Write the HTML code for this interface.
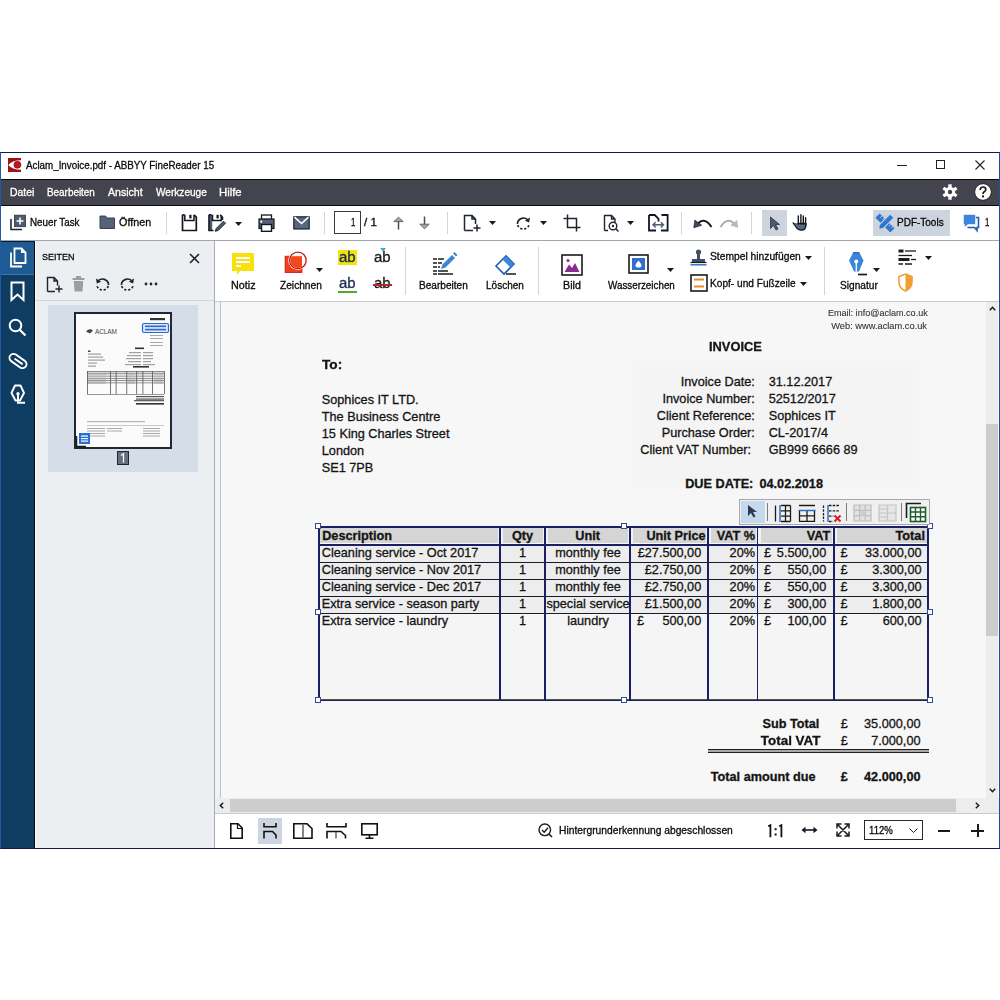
<!DOCTYPE html>
<html><head><meta charset="utf-8">
<style>
*{margin:0;padding:0;box-sizing:border-box}
html,body{width:1000px;height:1000px;background:#fff;overflow:hidden}
body{position:relative;font-family:"Liberation Sans",sans-serif;color:#0a0a0a}
.a{position:absolute}
.t{position:absolute;white-space:nowrap;-webkit-text-stroke:0.3px currentColor}
.sep{position:absolute;width:1px;background:#d4d4d4}
svg{position:absolute;overflow:visible}
</style></head><body>
<div class="a" style="left:0px;top:152px;width:1000px;height:697px;background:#ffffff;border:1px solid #121a4c;border-left-color:#2258a8;border-right-color:#1f4f9c"></div>
<svg style="left:8px;top:158px" width="13" height="14" viewBox="0 0 13 14"><rect width="13" height="14" fill="#9c1219"/><path d="M0.3 7Q4 2.3 13 2.3V11.7Q4 11.7 0.3 7Z" fill="#fff"/><circle cx="9.4" cy="6.8" r="3.5" fill="#c8141c" stroke="#5a0a0e" stroke-width="0.6"/></svg>
<div class="t" style="top:159.50px;font-size:10.5px;line-height:11.73px;left:25.58px;transform:scaleX(0.9325);transform-origin:0 0;">Aclam_Invoice.pdf - ABBYY FineReader 15</div>
<div class="a" style="left:897px;top:165px;width:10px;height:1px;background:#222;"></div>
<div class="a" style="left:936px;top:160px;width:9px;height:9px;background:transparent;border:1px solid #222"></div>
<svg style="left:975px;top:160px" width="10" height="10" viewBox="0 0 10 10"><path d="M0.5 0.5L9.5 9.5M9.5 0.5L0.5 9.5" stroke="#222" stroke-width="1.1"/></svg>
<div class="a" style="left:1px;top:179px;width:998px;height:27px;background:#44444f;border-top:1px solid #08080f;border-bottom:1px solid #08080f"></div>
<div class="t" style="top:187.00px;font-size:10.5px;line-height:11.73px;color:#ffffff;left:9.58px;transform:scaleX(0.9930);transform-origin:0 0;">Datei</div>
<div class="t" style="top:187.00px;font-size:10.5px;line-height:11.73px;color:#ffffff;left:47.08px;transform:scaleX(0.9420);transform-origin:0 0;">Bearbeiten</div>
<div class="t" style="top:187.00px;font-size:10.5px;line-height:11.73px;color:#ffffff;left:108.38px;transform:scaleX(1.0060);transform-origin:0 0;">Ansicht</div>
<div class="t" style="top:187.00px;font-size:10.5px;line-height:11.73px;color:#ffffff;left:155.88px;transform:scaleX(0.9608);transform-origin:0 0;">Werkzeuge</div>
<div class="t" style="top:187.00px;font-size:10.5px;line-height:11.73px;color:#ffffff;left:219.08px;transform:scaleX(1.0778);transform-origin:0 0;">Hilfe</div>
<svg style="left:942px;top:184px" width="16" height="16" viewBox="0 0 16 16"><g fill="#fff"><circle cx="8" cy="8" r="5.2"/><rect x="6.3" y="0.3" width="3.4" height="4" transform="rotate(0 8 8)"/><rect x="6.3" y="0.3" width="3.4" height="4" transform="rotate(60 8 8)"/><rect x="6.3" y="0.3" width="3.4" height="4" transform="rotate(120 8 8)"/><rect x="6.3" y="0.3" width="3.4" height="4" transform="rotate(180 8 8)"/><rect x="6.3" y="0.3" width="3.4" height="4" transform="rotate(240 8 8)"/><rect x="6.3" y="0.3" width="3.4" height="4" transform="rotate(300 8 8)"/></g><circle cx="8" cy="8" r="2.2" fill="#43434e"/></svg>
<svg style="left:974px;top:183px" width="18" height="18" viewBox="0 0 18 18"><circle cx="9" cy="9" r="8.3" fill="#fff" stroke="#111" stroke-width="0.8"/><path d="M6.2 7Q6.2 4 9 4Q11.8 4 11.8 6.5Q11.8 8 10 9Q9 9.6 9 11" fill="none" stroke="#1b1b1b" stroke-width="1.7"/><rect x="8" y="12.4" width="2" height="2" fill="#1b1b1b"/></svg>
<div class="a" style="left:1px;top:206px;width:998px;height:35px;background:#ffffff;border-bottom:1px solid #a4a6a9"></div>
<svg style="left:9px;top:214px" width="18" height="17" viewBox="0 0 18 17"><path d="M2 5V15.5H13" fill="none" stroke="#1d2530" stroke-width="1.6"/><rect x="5.5" y="1.2" width="11" height="11.5" fill="#4e5c72" stroke="#2b3444" stroke-width="0.8"/><path d="M11 3.5V10.5M7.5 7H14.5" stroke="#fff" stroke-width="1.6"/></svg>
<div class="t" style="top:216.50px;font-size:10.5px;line-height:11.73px;left:30.38px;transform:scaleX(0.9348);transform-origin:0 0;">Neuer Task</div>
<svg style="left:99px;top:214px" width="17" height="16" viewBox="0 0 17 16"><path d="M1 2H6.5L8 4H15.5V14.5H1Z" fill="#566277" stroke="#2b3444" stroke-width="0.9"/></svg>
<div class="t" style="top:216.50px;font-size:10.5px;line-height:11.73px;left:119.08px;transform:scaleX(1.0258);transform-origin:0 0;">Öffnen</div>
<div class="sep" style="left:166px;top:212px;height:22px"></div>
<svg style="left:181px;top:214px" width="17" height="18" viewBox="0 0 17 18"><path d="M1.5 0.8V16.5H15.3V3.2L13 0.8M1.5 0.8H3.5" fill="none" stroke="#111820" stroke-width="1.7"/><path d="M3.8 0.8V6.5H13V1" fill="none" stroke="#111820" stroke-width="1.5"/><rect x="8.3" y="0.8" width="2.2" height="3.6" fill="#111820"/></svg>
<svg style="left:208px;top:214px" width="19" height="18" viewBox="0 0 19 18"><rect x="0.6" y="0.8" width="3.6" height="16" fill="#4e5c72"/><path d="M1 0.8V16.5H5.5M1 0.8H3.5M14.5 6V3.2L12.2 0.8" fill="none" stroke="#111820" stroke-width="1.5"/><path d="M4.5 0.8V6.5H13.2V1" fill="none" stroke="#111820" stroke-width="1.5"/><rect x="8.5" y="0.8" width="2.2" height="3.6" fill="#111820"/><path d="M7.3 17.3L8.2 14.5L15.5 7.2L17.5 9.2L10.2 16.5Z" fill="#4e5c72" stroke="#111820" stroke-width="0.9"/></svg>
<svg style="left:235px;top:222px" width="7" height="4" viewBox="0 0 7 4"><path d="M0 0H7L3.5 4Z" fill="#1b1b1b"/></svg>
<svg style="left:258px;top:214px" width="17" height="19" viewBox="0 0 17 19"><rect x="3.5" y="1" width="10" height="4.5" fill="#fff" stroke="#111820" stroke-width="1.3"/><rect x="1" y="5" width="15" height="9.5" fill="#55627a" stroke="#111820" stroke-width="1.2"/><rect x="2.2" y="6.6" width="2" height="2" fill="#fff"/><rect x="3.5" y="10.5" width="10" height="6.8" fill="#fff" stroke="#111820" stroke-width="1.4"/></svg>
<svg style="left:293px;top:216px" width="17" height="14" viewBox="0 0 17 14"><rect x="0.8" y="0.8" width="15.4" height="12.2" fill="#5a667c" stroke="#111820" stroke-width="1.1"/><path d="M1.5 1.2L8.5 7.5L15.5 1.2" fill="none" stroke="#fff" stroke-width="1.6"/></svg>
<div class="sep" style="left:324px;top:212px;height:22px"></div>
<div class="a" style="left:334px;top:211px;width:27px;height:23px;background:#fff;border:1px solid #3a3a3a"></div>
<div class="t" style="top:216.50px;font-size:10.5px;line-height:11.73px;left:351.08px;transform:scaleX(0.7432);transform-origin:0 0;">1</div>
<div class="t" style="top:216.50px;font-size:10.5px;line-height:11.73px;left:363.58px;transform:scaleX(1.0999);transform-origin:0 0;">/ 1</div>
<svg style="left:393px;top:216px" width="11" height="14" viewBox="0 0 11 14"><path d="M5.5 5V13.5" stroke="#4a4d52" stroke-width="1.5"/><path d="M0.8 5.6L5.5 1.2L10.2 5.6Z" fill="#a5a9ae" stroke="#55585d" stroke-width="0.9" stroke-linejoin="round"/></svg>
<svg style="left:419px;top:216px" width="11" height="14" viewBox="0 0 11 14"><path d="M5.5 0.5V8.5" stroke="#4a4d52" stroke-width="1.5"/><path d="M0.8 8.2L5.5 12.8L10.2 8.2Z" fill="#a5a9ae" stroke="#55585d" stroke-width="0.9" stroke-linejoin="round"/></svg>
<div class="sep" style="left:447px;top:212px;height:22px"></div>
<svg style="left:463px;top:214px" width="19" height="18" viewBox="0 0 19 18"><path d="M1.5 16.5V1.5H9L12.5 5V10M9 1.5V5H12.5M1.5 16.5H10" fill="none" stroke="#1d2530" stroke-width="1.5"/><path d="M14 10.5V17.5M10.5 14H17.5" stroke="#1d2530" stroke-width="1.5"/></svg>
<svg style="left:489px;top:221px" width="7" height="4" viewBox="0 0 7 4"><path d="M0 0H7L3.5 4Z" fill="#1b1b1b"/></svg>
<svg style="left:515px;top:215px" width="16" height="16" viewBox="0 0 16 16"><path d="M13.5 5.5A6.2 6.2 0 0 0 2.4 9" fill="none" stroke="#1d2530" stroke-width="1.6"/><path d="M2.6 10.2A6.2 6.2 0 0 0 14 10.2" fill="none" stroke="#1d2530" stroke-width="1.7" stroke-dasharray="2.2 1.8"/><path d="M15 2.5L14.2 7.5L9.8 5.8Z" fill="#1d2530"/></svg>
<svg style="left:540px;top:221px" width="7" height="4" viewBox="0 0 7 4"><path d="M0 0H7L3.5 4Z" fill="#1b1b1b"/></svg>
<svg style="left:563px;top:214px" width="18" height="18" viewBox="0 0 18 18"><path d="M4.5 0.5V13.5H17.5M0.5 4.5H13.5V17.5" fill="none" stroke="#1d2530" stroke-width="1.5"/></svg>
<svg style="left:603px;top:214px" width="18" height="18" viewBox="0 0 18 18"><path d="M1.5 16.5V1.5H8.5L12 5V8M8.5 1.5V5H12M1.5 16.5H5" fill="none" stroke="#1d2530" stroke-width="1.4"/><circle cx="10" cy="12" r="3.8" fill="#fff" stroke="#1d2530" stroke-width="1.4"/><circle cx="10" cy="12" r="1.2" fill="#1d2530"/><path d="M12.8 14.8L15.5 17.5" stroke="#1d2530" stroke-width="1.5"/></svg>
<svg style="left:627px;top:221px" width="7" height="4" viewBox="0 0 7 4"><path d="M0 0H7L3.5 4Z" fill="#1b1b1b"/></svg>
<svg style="left:648px;top:214px" width="21" height="18" viewBox="0 0 21 18"><path d="M1 1V16.5H8M1 1H6.8L10.5 4.8V7.5M13.5 1H19.6V16.5H13" fill="none" stroke="#111820" stroke-width="1.8"/><path d="M5 10.8H15.5M7.7 8.2L5 10.8L7.7 13.4M12.8 8.2L15.5 10.8L12.8 13.4" fill="none" stroke="#4e5c72" stroke-width="1.4"/></svg>
<div class="sep" style="left:681px;top:212px;height:22px"></div>
<svg style="left:693px;top:217px" width="20" height="12" viewBox="0 0 20 12"><path d="M5 6.5Q11.5 -0.5 18.5 10" fill="none" stroke="#111820" stroke-width="2"/><path d="M0.8 10.8L1.8 3L8.8 8.3Z" fill="#3d4a5e" stroke="#111820" stroke-width="0.6"/></svg>
<svg style="left:719px;top:217px" width="20" height="12" viewBox="0 0 20 12"><path d="M15 6.5Q8.5 -0.5 1.5 10" fill="none" stroke="#a9adb3" stroke-width="2"/><path d="M19.2 10.8L18.2 3L11.2 8.3Z" fill="#b5b9bf"/></svg>
<div class="sep" style="left:751px;top:212px;height:22px"></div>
<div class="a" style="left:762px;top:210px;width:25px;height:26px;background:#cdd4de;"></div>
<svg style="left:769px;top:216px" width="12" height="15" viewBox="0 0 12 15"><path d="M1.5 1V12.5L4.5 9.5L7 14L9 13L6.5 8.5H10.5Z" fill="#4d596c" stroke="#2b3444" stroke-width="0.8"/></svg>
<svg style="left:792px;top:214px" width="16" height="17" viewBox="0 0 16 17"><path d="M5.5 9.5H14V11Q14 16 9.5 16.2Q6 16.2 4.3 13.5L0.8 8.5" fill="#5a667c" stroke="#111820" stroke-width="1.3" stroke-linejoin="round"/><path d="M6.3 2V10M8.9 0.8V10M11.3 2V10M13.6 3.8V11" stroke="#111820" stroke-width="1.4" stroke-linecap="round"/></svg>
<div class="a" style="left:873px;top:210px;width:77px;height:26px;background:#cdd4de;"></div>
<svg style="left:876px;top:214px" width="18" height="18" viewBox="0 0 18 18"><g transform="rotate(45 9 9)"><rect x="-1.5" y="6" width="21" height="6" fill="#2f77cf"/><path d="M2 6V8.5M5 6V8M8 6V8.5M11 6V8M14 6V8.5M17 6V8" stroke="#cdd4de" stroke-width="0.9"/></g><g transform="rotate(-45 9 9)"><rect x="0" y="5.8" width="19.5" height="6.4" fill="#cdd4de"/><path d="M1 9L4 6.8H18.5V11.2H4Z" fill="#2f77cf"/></g></svg>
<div class="t" style="top:216.50px;font-size:10.5px;line-height:11.73px;left:897.38px;transform:scaleX(0.9517);transform-origin:0 0;">PDF-Tools</div>
<svg style="left:963px;top:214px" width="17" height="18" viewBox="0 0 17 18"><path d="M4.5 3.5H15.5V13.5H14V16.5L11.5 13.5H4.5" fill="none" stroke="#1f5fb0" stroke-width="1.6"/><path d="M0.5 0.5H12.5V10.5H5L1.5 13.5V10.5H0.5Z" fill="#3b86d8" stroke="#fff" stroke-width="0.6"/></svg>
<div class="t" style="top:216.50px;font-size:10.5px;line-height:11.73px;left:984.58px;transform:scaleX(0.7432);transform-origin:0 0;">1</div>
<div class="a" style="left:1px;top:241px;width:34px;height:607px;background:#0e3d61;border-right:1px solid #03060c;border-top:1px solid #061a30"></div>
<div class="a" style="left:1px;top:242px;width:33px;height:33px;background:#1f5b93;border-bottom:1px solid #3a78b0"></div>
<svg style="left:8px;top:247px" width="20" height="21" viewBox="0 0 20 21"><path d="M3 5.5V19.5H14" fill="none" stroke="#fff" stroke-width="1.8"/><path d="M6.5 1.5H13.5L17.5 5.5V16H6.5Z" fill="none" stroke="#fff" stroke-width="1.8"/><path d="M13 1.5V6H17.5Z" fill="#fff"/></svg>
<svg style="left:10px;top:281px" width="15" height="21" viewBox="0 0 15 21"><path d="M1.5 1.5H13.5V19L7.5 13.5L1.5 19Z" fill="none" stroke="#fff" stroke-width="2"/></svg>
<svg style="left:8px;top:318px" width="19" height="19" viewBox="0 0 19 19"><circle cx="7.5" cy="7.5" r="5.8" fill="none" stroke="#fff" stroke-width="2"/><path d="M11.5 11.5L17.5 17.5" stroke="#fff" stroke-width="2.2"/></svg>
<svg style="left:8px;top:352px" width="20" height="18" viewBox="0 0 20 18"><g transform="rotate(35 10 9)"><rect x="0.5" y="5" width="19" height="8" rx="4" fill="none" stroke="#fff" stroke-width="1.9"/><path d="M15 9H6.5" stroke="#fff" stroke-width="1.9" stroke-linecap="round"/></g></svg>
<svg style="left:10px;top:384px" width="16" height="21" viewBox="0 0 16 21"><path d="M5 1.5H10.5L14 9L10 16.5H5.5L1.5 9Z" fill="none" stroke="#fff" stroke-width="1.9" stroke-linejoin="round"/><circle cx="8" cy="9.8" r="1.7" fill="#fff"/><path d="M8 10V17.5M7 18.8H15" stroke="#fff" stroke-width="1.9"/></svg>
<div class="a" style="left:35px;top:241px;width:180px;height:607px;background:#eceff2;border-right:1px solid #a9abae;border-left:1px solid #fff"></div>
<div class="t" style="top:252.43px;font-size:9.8px;line-height:10.95px;left:42.21px;transform:scaleX(0.9209);transform-origin:0 0;">SEITEN</div>
<svg style="left:189px;top:253px" width="11" height="11" viewBox="0 0 11 11"><path d="M1 1L10 10M10 1L1 10" stroke="#1d2530" stroke-width="1.6"/></svg>
<svg style="left:46px;top:276px" width="19" height="17" viewBox="0 0 19 17"><path d="M1.5 15.5V1.5H8L11.5 5V9.5M8 1.5V5H11.5M1.5 15.5H9" fill="none" stroke="#1d2530" stroke-width="1.4"/><path d="M13 9.5V16.5M9.5 13H16.5" stroke="#1d2530" stroke-width="1.4"/></svg>
<svg style="left:72px;top:276px" width="13" height="16" viewBox="0 0 13 16"><rect x="0.5" y="2" width="12" height="2" fill="#9a9da2"/><rect x="4" y="0" width="5" height="2" fill="#9a9da2"/><path d="M1.8 5H11.2L10.5 15.5H2.5Z" fill="#9a9da2"/></svg>
<svg style="left:95px;top:276px" width="16" height="16" viewBox="0 0 16 16"><path d="M2.5 5.5A6.2 6.2 0 0 1 13.6 9" fill="none" stroke="#1d2530" stroke-width="1.6"/><path d="M13.4 10.2A6.2 6.2 0 0 1 2 10.2" fill="none" stroke="#1d2530" stroke-width="1.7" stroke-dasharray="2.2 1.8"/><path d="M1 2.5L1.8 7.5L6.2 5.8Z" fill="#1d2530"/></svg>
<svg style="left:119px;top:276px" width="16" height="16" viewBox="0 0 16 16"><path d="M13.5 5.5A6.2 6.2 0 0 0 2.4 9" fill="none" stroke="#1d2530" stroke-width="1.6"/><path d="M2.6 10.2A6.2 6.2 0 0 0 14 10.2" fill="none" stroke="#1d2530" stroke-width="1.7" stroke-dasharray="2.2 1.8"/><path d="M15 2.5L14.2 7.5L9.8 5.8Z" fill="#1d2530"/></svg>
<svg style="left:144px;top:282px" width="14" height="4" viewBox="0 0 14 4"><circle cx="2" cy="2" r="1.4" fill="#1d2530"/><circle cx="7" cy="2" r="1.4" fill="#1d2530"/><circle cx="12" cy="2" r="1.4" fill="#1d2530"/></svg>
<div class="a" style="left:35px;top:300px;width:179px;height:1px;background:#d2d6db;"></div>
<div class="a" style="left:48px;top:305px;width:150px;height:167px;background:#d5dde8;"></div>
<div class="a" style="left:74px;top:312px;width:98px;height:137px;background:#fbfbfb;border:2px solid #1f2733"></div>
<svg style="left:74px;top:312px" width="98" height="137" viewBox="0 0 98 137"><rect x="76" y="6" width="15" height="2.2" fill="#333"/><rect x="68.5" y="11.5" width="26" height="9" rx="1.5" fill="#dbe8fb" stroke="#2a6ad0" stroke-width="1.2"/><rect x="71" y="13.5" width="21" height="1.6" fill="#2a6ad0"/><rect x="71" y="16.8" width="21" height="1.6" fill="#2a6ad0"/><path d="M12 19.5Q15.5 15.5 19 18.5L16 21.5Z" fill="#444"/><text x="21" y="21.5" font-size="6.5" font-family="Liberation Sans" fill="#444" textLength="22">ACLAM</text><rect x="76" y="23" width="13" height="1" fill="#aaa"/><rect x="76" y="26" width="13" height="1" fill="#aaa"/><rect x="76" y="30" width="13" height="1" fill="#aaa"/><rect x="76" y="33" width="13" height="1" fill="#aaa"/><rect x="61" y="35.5" width="9" height="1.6" fill="#333"/><rect x="14" y="38.5" width="2.5" height="1.4" fill="#333"/><rect x="14" y="41.5" width="13" height="1.2" fill="#a0a0a0"/><rect x="14" y="44.5" width="15" height="1.2" fill="#a0a0a0"/><rect x="14" y="47.5" width="17" height="1.2" fill="#a0a0a0"/><rect x="14" y="50.5" width="9" height="1.2" fill="#a0a0a0"/><rect x="14" y="53.5" width="8" height="1.2" fill="#a0a0a0"/><rect x="55" y="40" width="12" height="1.2" fill="#a0a0a0"/><rect x="53" y="43" width="14" height="1.2" fill="#a0a0a0"/><rect x="52" y="46" width="15" height="1.2" fill="#a0a0a0"/><rect x="54" y="49" width="13" height="1.2" fill="#a0a0a0"/><rect x="51" y="52" width="16" height="1.2" fill="#a0a0a0"/><rect x="69" y="40" width="10" height="1.2" fill="#a0a0a0"/><rect x="69" y="43" width="10" height="1.2" fill="#a0a0a0"/><rect x="69" y="46" width="10" height="1.2" fill="#a0a0a0"/><rect x="69" y="49" width="8" height="1.2" fill="#a0a0a0"/><rect x="69" y="52" width="12" height="1.2" fill="#a0a0a0"/><rect x="59" y="54" width="16" height="1.6" fill="#333"/><rect x="13" y="59" width="77" height="2.5" fill="#d8d8d8"/><rect x="13" y="61.5" width="77" height="9" fill="#f2f2f2"/><rect x="13" y="59" width="77" height="0.6" fill="#555"/><rect x="13" y="61.5" width="77" height="0.6" fill="#555"/><rect x="13" y="63.8" width="77" height="0.6" fill="#555"/><rect x="13" y="66" width="77" height="0.6" fill="#555"/><rect x="13" y="68.4" width="77" height="0.6" fill="#555"/><rect x="13" y="70.6" width="77" height="0.6" fill="#555"/><rect x="13" y="82" width="77" height="0.6" fill="#555"/><rect x="13" y="59" width="0.8" height="23" fill="#555"/><rect x="36" y="59" width="0.8" height="23" fill="#555"/><rect x="41.7" y="59" width="0.8" height="23" fill="#555"/><rect x="52.4" y="59" width="0.8" height="23" fill="#555"/><rect x="62.3" y="59" width="0.8" height="23" fill="#555"/><rect x="68.5" y="59" width="0.8" height="23" fill="#555"/><rect x="78.2" y="59" width="0.8" height="23" fill="#555"/><rect x="90" y="59" width="0.8" height="23" fill="#555"/><rect x="14" y="62.3" width="18" height="0.9" fill="#b8b8b8"/><rect x="54" y="62.3" width="7" height="0.9" fill="#b8b8b8"/><rect x="80" y="62.3" width="9" height="0.9" fill="#b8b8b8"/><rect x="14" y="64.5" width="18" height="0.9" fill="#b8b8b8"/><rect x="54" y="64.5" width="7" height="0.9" fill="#b8b8b8"/><rect x="80" y="64.5" width="9" height="0.9" fill="#b8b8b8"/><rect x="14" y="66.7" width="18" height="0.9" fill="#b8b8b8"/><rect x="54" y="66.7" width="7" height="0.9" fill="#b8b8b8"/><rect x="80" y="66.7" width="9" height="0.9" fill="#b8b8b8"/><rect x="14" y="68.89999999999999" width="18" height="0.9" fill="#b8b8b8"/><rect x="54" y="68.89999999999999" width="7" height="0.9" fill="#b8b8b8"/><rect x="80" y="68.89999999999999" width="9" height="0.9" fill="#b8b8b8"/><rect x="14" y="71.1" width="18" height="0.9" fill="#b8b8b8"/><rect x="54" y="71.1" width="7" height="0.9" fill="#b8b8b8"/><rect x="80" y="71.1" width="9" height="0.9" fill="#b8b8b8"/><rect x="62" y="84" width="28" height="1.2" fill="#555"/><rect x="62" y="86.5" width="28" height="1.2" fill="#555"/><rect x="60" y="88.3" width="30" height="0.9" fill="#222"/><rect x="62" y="91" width="28" height="1.6" fill="#333"/><rect x="13" y="109" width="58" height="1.2" fill="#b8b8b8"/><rect x="13" y="113" width="77" height="0.6" fill="#aaa"/><rect x="13" y="116.0" width="18" height="1" fill="#aaa"/><rect x="69" y="116.0" width="17" height="1" fill="#aaa"/><rect x="13" y="118.5" width="18" height="1" fill="#aaa"/><rect x="69" y="118.5" width="17" height="1" fill="#aaa"/><rect x="13" y="121.0" width="18" height="1" fill="#aaa"/><rect x="69" y="121.0" width="17" height="1" fill="#aaa"/><rect x="13" y="123.5" width="18" height="1" fill="#aaa"/><rect x="69" y="123.5" width="17" height="1" fill="#aaa"/><rect x="33" y="116.0" width="15" height="1" fill="#aaa"/><rect x="33" y="118.5" width="15" height="1" fill="#aaa"/><path d="M2.5 124V134.5H12" fill="none" stroke="#1b1b1b" stroke-width="1.5"/><rect x="5" y="121" width="11" height="11" fill="#2b6ed3"/><rect x="7" y="123.5" width="7" height="1.2" fill="#fff"/><rect x="7" y="126" width="7" height="1.2" fill="#fff"/><rect x="7" y="128.5" width="7" height="1.2" fill="#fff"/></svg>
<div class="a" style="left:117px;top:451px;width:12px;height:14px;background:#66707e;border:1px solid #1e2530"></div>
<svg style="left:120px;top:453px" width="6" height="10" viewBox="0 0 6 10"><path d="M1 2.5L3.5 0.8V9.5" fill="none" stroke="#fff" stroke-width="1.3"/></svg>
<div class="a" style="left:215px;top:241px;width:784px;height:61px;background:#ffffff;border-bottom:1px solid #c8ccd1"></div>
<svg style="left:232px;top:253px" width="23" height="23" viewBox="0 0 23 23"><path d="M0 0H22V18H8L5 22V18H0Z" fill="#f8e10a"/><path d="M4 5H18M4 9H18M4 13H9" stroke="#fff" stroke-width="1.8"/></svg>
<div class="t" style="top:280.10px;font-size:10.5px;line-height:11.73px;left:231.08px;transform:scaleX(1.0258);transform-origin:0 0;">Notiz</div>
<svg style="left:284px;top:250px" width="24" height="24" viewBox="0 0 24 24"><defs><clipPath id="zc"><circle cx="13.9" cy="10.4" r="7.6"/></clipPath></defs><rect x="1.1" y="6.2" width="16.9" height="16.4" fill="#f23c1c" stroke="#c01a10" stroke-width="0.8"/><circle cx="13.9" cy="10.4" r="9.6" fill="#fff"/><circle cx="13.9" cy="10.4" r="8.3" fill="none" stroke="#c41e14" stroke-width="1.3"/><rect x="1.1" y="6.2" width="16.9" height="16.4" fill="#f5461c" clip-path="url(#zc)"/></svg>
<svg style="left:316px;top:268px" width="7" height="4" viewBox="0 0 7 4"><path d="M0 0H7L3.5 4Z" fill="#1b1b1b"/></svg>
<div class="t" style="top:280.10px;font-size:10.5px;line-height:11.73px;left:279.58px;transform:scaleX(0.9686);transform-origin:0 0;">Zeichnen</div>
<div class="a" style="left:338px;top:250px;width:19px;height:15px;background:#f3e20f;"></div>
<div class="t" style="top:250.33px;font-size:14px;line-height:15.64px;color:#1b2a52;left:338.94px;transform:scaleX(1.0673);transform-origin:0 0;">ab</div>
<div class="t" style="top:250.33px;font-size:14px;line-height:15.64px;color:#1b1b1b;left:374.44px;transform:scaleX(1.0673);transform-origin:0 0;">ab</div>
<svg style="left:380px;top:248px" width="6" height="4" viewBox="0 0 6 4"><path d="M0 0H6L3 3.5Z" fill="#27b3c9"/></svg>
<div class="t" style="top:276.33px;font-size:14px;line-height:15.64px;color:#1b2a52;left:338.94px;transform:scaleX(1.0673);transform-origin:0 0;">ab</div>
<div class="a" style="left:338px;top:291px;width:19px;height:2px;background:#5aa52a;"></div>
<div class="t" style="top:276.33px;font-size:14px;line-height:15.64px;color:#1b1b1b;left:374.44px;transform:scaleX(1.0673);transform-origin:0 0;">ab</div>
<div class="a" style="left:373px;top:284px;width:19px;height:2px;background:#b3272d;"></div>
<div class="sep" style="left:405px;top:247px;height:48px"></div>
<svg style="left:432px;top:252px" width="26" height="24" viewBox="0 0 26 24"><path d="M1 7H12M1 11H10M1 15H8M1 19H16M1 22H21" stroke="#1b1b1b" stroke-width="1.5" stroke-dasharray="4 1 20 0"/><path d="M9 17L10.5 12.5L20 3L23 6L13.5 15.5Z" fill="#3a86d9"/><path d="M21 1.5L22.5 0L25.5 3L24 4.5Z" fill="#3a86d9"/></svg>
<div class="t" style="top:280.10px;font-size:10.5px;line-height:11.73px;left:418.58px;transform:scaleX(0.9617);transform-origin:0 0;">Bearbeiten</div>
<svg style="left:494px;top:252px" width="24" height="24" viewBox="0 0 24 24"><path d="M2 14L12 4L20 12L10 22Z" fill="#fff" stroke="#1e5db3" stroke-width="1.6"/><path d="M8.5 7.5L12 4L20 12L16.5 15.5Z" fill="#3a86d9"/><path d="M12 22H22" stroke="#1b1b1b" stroke-width="1.5"/></svg>
<div class="t" style="top:280.10px;font-size:10.5px;line-height:11.73px;left:485.58px;transform:scaleX(0.9532);transform-origin:0 0;">Löschen</div>
<div class="sep" style="left:538px;top:247px;height:48px"></div>
<svg style="left:561px;top:254px" width="22" height="22" viewBox="0 0 22 22"><rect x="1" y="1" width="20" height="20" fill="#fff" stroke="#1b1b1b" stroke-width="1.6"/><circle cx="7" cy="6.5" r="1.5" fill="#8d2a8f"/><path d="M3.5 18L8 10.5L11 14L14 9L18.5 18Z" fill="#8d2a8f"/></svg>
<div class="t" style="top:280.10px;font-size:10.5px;line-height:11.73px;left:562.58px;transform:scaleX(1.0189);transform-origin:0 0;">Bild</div>
<svg style="left:628px;top:254px" width="21" height="20" viewBox="0 0 21 20"><rect x="1" y="1" width="19" height="18" fill="#fff" stroke="#1b1b1b" stroke-width="1.6"/><rect x="4" y="4" width="13" height="12" fill="#2f6fd0"/><path d="M10.5 6.5Q7.5 10 7.5 11.5Q7.5 13.5 10.5 13.5Q13.5 13.5 13.5 11.5Q13.5 10 10.5 6.5Z" fill="#fff"/></svg>
<svg style="left:667px;top:268px" width="7" height="4" viewBox="0 0 7 4"><path d="M0 0H7L3.5 4Z" fill="#1b1b1b"/></svg>
<div class="t" style="top:280.10px;font-size:10.5px;line-height:11.73px;left:607.58px;transform:scaleX(0.9363);transform-origin:0 0;">Wasserzeichen</div>
<svg style="left:690px;top:249px" width="17" height="17" viewBox="0 0 17 17"><circle cx="8.5" cy="3" r="2.6" fill="#434f63"/><rect x="7" y="4" width="3" height="6" fill="#434f63"/><path d="M2 10H15V13H2Z" fill="#434f63"/><path d="M0.5 13.5H16.5" stroke="#1b1b1b" stroke-width="1.2"/><path d="M0.5 15.8H16.5" stroke="#2a66c4" stroke-width="1.4"/></svg>
<div class="t" style="top:251.20px;font-size:10.5px;line-height:11.73px;left:710.48px;transform:scaleX(0.9787);transform-origin:0 0;">Stempel hinzufügen</div>
<svg style="left:805px;top:256px" width="7" height="4" viewBox="0 0 7 4"><path d="M0 0H7L3.5 4Z" fill="#1b1b1b"/></svg>
<svg style="left:690px;top:274px" width="18" height="18" viewBox="0 0 18 18"><rect x="1" y="1" width="16" height="16" fill="#fff" stroke="#1b1b1b" stroke-width="1.6"/><path d="M4 5.5H14M4 12.5H14" stroke="#e78a2c" stroke-width="1.8"/></svg>
<div class="t" style="top:277.50px;font-size:10.5px;line-height:11.73px;left:710.48px;transform:scaleX(0.9642);transform-origin:0 0;">Kopf- und Fußzeile</div>
<svg style="left:800px;top:282px" width="7" height="4" viewBox="0 0 7 4"><path d="M0 0H7L3.5 4Z" fill="#1b1b1b"/></svg>
<div class="sep" style="left:824px;top:247px;height:48px"></div>
<svg style="left:848px;top:252px" width="20" height="24" viewBox="0 0 20 24"><path d="M5 0.8H11.5L15.5 8.5L11 19.5H6L1 8.5Z" fill="#3a86d9"/><circle cx="8.3" cy="9.5" r="2" fill="#fff"/><path d="M8.3 11V19.5" stroke="#fff" stroke-width="1.3"/><path d="M5 0.8H11.5" stroke="#2468c0" stroke-width="1.4"/><path d="M10 22.5H19" stroke="#1b1b1b" stroke-width="1.7"/></svg>
<svg style="left:873px;top:268px" width="7" height="4" viewBox="0 0 7 4"><path d="M0 0H7L3.5 4Z" fill="#1b1b1b"/></svg>
<div class="t" style="top:280.10px;font-size:10.5px;line-height:11.73px;left:839.58px;transform:scaleX(0.9676);transform-origin:0 0;">Signatur</div>
<svg style="left:898px;top:249px" width="19" height="17" viewBox="0 0 19 17"><rect x="0.5" y="0.5" width="5" height="3" fill="#1b1b1b"/><path d="M7 2H18" stroke="#1b1b1b" stroke-width="1.3"/><path d="M0.5 6.5H14" stroke="#1b1b1b" stroke-width="1.3"/><rect x="0.5" y="9" width="11" height="3" fill="#1b1b1b"/><path d="M13 10.5H18" stroke="#1b1b1b" stroke-width="1.3"/><path d="M0.5 15H5M7 15H14" stroke="#1b1b1b" stroke-width="1.3"/></svg>
<svg style="left:925px;top:256px" width="7" height="4" viewBox="0 0 7 4"><path d="M0 0H7L3.5 4Z" fill="#1b1b1b"/></svg>
<svg style="left:898px;top:273px" width="15" height="19" viewBox="0 0 15 19"><path d="M7.5 1L14 3.5V9Q14 15 7.5 18Q1 15 1 9V3.5Z" fill="#fff" stroke="#f0a030" stroke-width="1.6"/><path d="M7.5 1L14 3.5V9Q14 15 7.5 18Z" fill="#f0a030"/></svg>
<div class="a" style="left:215px;top:302px;width:771px;height:496px;background:#f7f7f7;"></div>
<div class="a" style="left:215px;top:302px;width:5px;height:496px;background:#f1f3f5;"></div>
<div class="a" style="left:220px;top:302px;width:1px;height:496px;background:#c2c2c2;"></div>
<div class="a" style="left:632px;top:358px;width:288px;height:130px;background:#f4f4f4;filter:blur(5px)"></div>
<div class="t" style="top:308.11px;font-size:9.6px;line-height:10.72px;color:#333;right:72.62px;transform:scaleX(0.9438);transform-origin:100% 0;-webkit-text-stroke:0.1px #333;">Email: info@aclam.co.uk</div>
<div class="t" style="top:321.11px;font-size:9.6px;line-height:10.72px;color:#333;right:72.62px;transform:scaleX(0.9674);transform-origin:100% 0;-webkit-text-stroke:0.1px #333;">Web: www.aclam.co.uk</div>
<div class="t" style="top:340.31px;font-size:12.7px;line-height:14.19px;font-weight:bold;color:#141414;left:709.19px;transform:scaleX(1.0124);transform-origin:0 0;">INVOICE</div>
<div class="t" style="top:357.71px;font-size:12.7px;line-height:14.19px;font-weight:bold;color:#141414;left:321.79px;transform:scaleX(1.0763);transform-origin:0 0;">To:</div>
<div class="t" style="top:392.51px;font-size:12.7px;line-height:14.19px;color:#141414;left:321.79px;">Sophices IT LTD.</div>
<div class="t" style="top:409.51px;font-size:12.7px;line-height:14.19px;color:#141414;left:321.79px;">The Business Centre</div>
<div class="t" style="top:426.51px;font-size:12.7px;line-height:14.19px;color:#141414;left:321.79px;">15 King Charles Street</div>
<div class="t" style="top:443.51px;font-size:12.7px;line-height:14.19px;color:#141414;left:321.79px;">London</div>
<div class="t" style="top:460.51px;font-size:12.7px;line-height:14.19px;color:#141414;left:321.79px;">SE1 7PB</div>
<div class="t" style="top:375.11px;font-size:12.7px;line-height:14.19px;color:#141414;right:245.19px;">Invoice Date:</div>
<div class="t" style="top:375.11px;font-size:12.7px;line-height:14.19px;color:#141414;left:768.69px;">31.12.2017</div>
<div class="t" style="top:392.11px;font-size:12.7px;line-height:14.19px;color:#141414;right:245.19px;">Invoice Number:</div>
<div class="t" style="top:392.11px;font-size:12.7px;line-height:14.19px;color:#141414;left:768.69px;">52512/2017</div>
<div class="t" style="top:409.11px;font-size:12.7px;line-height:14.19px;color:#141414;right:245.19px;">Client Reference:</div>
<div class="t" style="top:409.11px;font-size:12.7px;line-height:14.19px;color:#141414;left:768.69px;">Sophices IT</div>
<div class="t" style="top:426.11px;font-size:12.7px;line-height:14.19px;color:#141414;right:245.19px;">Purchase Order:</div>
<div class="t" style="top:426.11px;font-size:12.7px;line-height:14.19px;color:#141414;left:768.69px;">CL-2017/4</div>
<div class="t" style="top:443.11px;font-size:12.7px;line-height:14.19px;color:#141414;right:248.99px;">Client VAT Number:</div>
<div class="t" style="top:443.11px;font-size:12.7px;line-height:14.19px;color:#141414;left:768.69px;">GB999 6666 89</div>
<div class="t" style="top:477.11px;font-size:12.7px;line-height:14.19px;font-weight:bold;color:#141414;left:685.19px;">DUE DATE:</div>
<div class="t" style="top:477.11px;font-size:12.7px;line-height:14.19px;font-weight:bold;color:#141414;left:759.49px;">04.02.2018</div>
<div class="a" style="left:320px;top:528px;width:608px;height:15px;background:#d5d5d5;"></div>
<div class="a" style="left:320px;top:546px;width:608px;height:67px;background:#ededed;"></div>
<div class="a" style="left:320px;top:615px;width:608px;height:84px;background:#f5f5f5;"></div>
<div class="a" style="left:498px;top:528px;width:5px;height:17px;background:#f2f2f2;"></div>
<div class="a" style="left:543px;top:528px;width:5px;height:17px;background:#f2f2f2;"></div>
<div class="a" style="left:628px;top:528px;width:5px;height:17px;background:#f2f2f2;"></div>
<div class="a" style="left:706px;top:528px;width:5px;height:17px;background:#f2f2f2;"></div>
<div class="a" style="left:755.5px;top:528px;width:5px;height:17px;background:#f2f2f2;"></div>
<div class="a" style="left:832px;top:528px;width:5px;height:17px;background:#f2f2f2;"></div>
<div class="a" style="left:318px;top:561.5px;width:610px;height:1.3px;background:#1a1a2e;"></div>
<div class="a" style="left:318px;top:578.5px;width:610px;height:1.3px;background:#1a1a2e;"></div>
<div class="a" style="left:318px;top:596.0px;width:610px;height:1.3px;background:#1a1a2e;"></div>
<div class="a" style="left:318px;top:613.0px;width:610px;height:1.3px;background:#1a1a2e;"></div>
<div class="a" style="left:318px;top:544.0px;width:610px;height:2px;background:#1c1f66;"></div>
<div class="a" style="left:318px;top:526px;width:610px;height:2px;background:#1c1f66;"></div>
<div class="a" style="left:318px;top:699px;width:611px;height:2px;background:#1c1f66;"></div>
<div class="a" style="left:318px;top:698.5px;width:610px;height:1px;background:#5a5a3a;"></div>
<div class="a" style="left:318.0px;top:526px;width:1.8px;height:174px;background:#1c1f66;"></div>
<div class="a" style="left:499.2px;top:526px;width:1.8px;height:174px;background:#1c1f66;"></div>
<div class="a" style="left:544.2px;top:526px;width:1.8px;height:174px;background:#1c1f66;"></div>
<div class="a" style="left:629.2px;top:526px;width:1.8px;height:174px;background:#1c1f66;"></div>
<div class="a" style="left:707.2px;top:526px;width:1.8px;height:174px;background:#1c1f66;"></div>
<div class="a" style="left:756.7px;top:526px;width:1.8px;height:174px;background:#1c1f66;"></div>
<div class="a" style="left:833.2px;top:526px;width:1.8px;height:174px;background:#1c1f66;"></div>
<div class="a" style="left:927.2px;top:526px;width:1.8px;height:174px;background:#1c1f66;"></div>
<div class="a" style="left:315px;top:522.5px;width:6px;height:6px;background:#fff;border:1px solid #2a4f98"></div>
<div class="a" style="left:621px;top:522.5px;width:6px;height:6px;background:#fff;border:1px solid #2a4f98"></div>
<div class="a" style="left:926.5px;top:522.5px;width:6px;height:6px;background:#fff;border:1px solid #2a4f98"></div>
<div class="a" style="left:315px;top:609px;width:6px;height:6px;background:#fff;border:1px solid #2a4f98"></div>
<div class="a" style="left:926.5px;top:609px;width:6px;height:6px;background:#fff;border:1px solid #2a4f98"></div>
<div class="a" style="left:315px;top:697px;width:6px;height:6px;background:#fff;border:1px solid #2a4f98"></div>
<div class="a" style="left:621px;top:697px;width:6px;height:6px;background:#fff;border:1px solid #2a4f98"></div>
<div class="a" style="left:926.5px;top:697px;width:6px;height:6px;background:#fff;border:1px solid #2a4f98"></div>
<div class="t" style="top:529.31px;font-size:12.7px;line-height:14.19px;font-weight:bold;color:#141414;left:322.19px;">Description</div>
<div class="t" style="top:529.31px;font-size:12.7px;line-height:14.19px;font-weight:bold;color:#141414;left:522.50px;transform:translateX(-50%) scaleX(1.0000);transform-origin:50% 0;">Qty</div>
<div class="t" style="top:529.31px;font-size:12.7px;line-height:14.19px;font-weight:bold;color:#141414;left:587.70px;transform:translateX(-50%) scaleX(1.0000);transform-origin:50% 0;">Unit</div>
<div class="t" style="top:529.31px;font-size:12.7px;line-height:14.19px;font-weight:bold;color:#141414;right:294.39px;">Unit Price</div>
<div class="t" style="top:529.31px;font-size:12.7px;line-height:14.19px;font-weight:bold;color:#141414;right:244.99px;">VAT %</div>
<div class="t" style="top:529.31px;font-size:12.7px;line-height:14.19px;font-weight:bold;color:#141414;right:169.79px;">VAT</div>
<div class="t" style="top:529.31px;font-size:12.7px;line-height:14.19px;font-weight:bold;color:#141414;right:75.09px;">Total</div>
<div class="t" style="top:546.11px;font-size:12.7px;line-height:14.19px;color:#141414;left:321.79px;">Cleaning service - Oct 2017</div>
<div class="t" style="top:546.11px;font-size:12.7px;line-height:14.19px;color:#141414;left:522.50px;transform:translateX(-50%) scaleX(1.0000);transform-origin:50% 0;">1</div>
<div class="t" style="top:546.11px;font-size:12.7px;line-height:14.19px;color:#141414;left:588.00px;transform:translateX(-50%) scaleX(1.0000);transform-origin:50% 0;">monthly fee</div>
<div class="t" style="top:546.11px;font-size:12.7px;line-height:14.19px;color:#141414;right:298.79px;">£27.500,00</div>
<div class="t" style="top:546.11px;font-size:12.7px;line-height:14.19px;color:#141414;right:244.99px;">20%</div>
<div class="t" style="top:546.11px;font-size:12.7px;line-height:14.19px;color:#141414;left:764.09px;">£</div>
<div class="t" style="top:546.11px;font-size:12.7px;line-height:14.19px;color:#141414;right:173.79px;">5.500,00</div>
<div class="t" style="top:546.11px;font-size:12.7px;line-height:14.19px;color:#141414;left:840.49px;">£</div>
<div class="t" style="top:546.11px;font-size:12.7px;line-height:14.19px;color:#141414;right:78.49px;">33.000,00</div>
<div class="t" style="top:563.11px;font-size:12.7px;line-height:14.19px;color:#141414;left:321.79px;">Cleaning service - Nov 2017</div>
<div class="t" style="top:563.11px;font-size:12.7px;line-height:14.19px;color:#141414;left:522.50px;transform:translateX(-50%) scaleX(1.0000);transform-origin:50% 0;">1</div>
<div class="t" style="top:563.11px;font-size:12.7px;line-height:14.19px;color:#141414;left:588.00px;transform:translateX(-50%) scaleX(1.0000);transform-origin:50% 0;">monthly fee</div>
<div class="t" style="top:563.11px;font-size:12.7px;line-height:14.19px;color:#141414;right:298.79px;">£2.750,00</div>
<div class="t" style="top:563.11px;font-size:12.7px;line-height:14.19px;color:#141414;right:244.99px;">20%</div>
<div class="t" style="top:563.11px;font-size:12.7px;line-height:14.19px;color:#141414;left:764.09px;">£</div>
<div class="t" style="top:563.11px;font-size:12.7px;line-height:14.19px;color:#141414;right:173.79px;">550,00</div>
<div class="t" style="top:563.11px;font-size:12.7px;line-height:14.19px;color:#141414;left:840.49px;">£</div>
<div class="t" style="top:563.11px;font-size:12.7px;line-height:14.19px;color:#141414;right:78.49px;">3.300,00</div>
<div class="t" style="top:580.11px;font-size:12.7px;line-height:14.19px;color:#141414;left:321.79px;">Cleaning service - Dec 2017</div>
<div class="t" style="top:580.11px;font-size:12.7px;line-height:14.19px;color:#141414;left:522.50px;transform:translateX(-50%) scaleX(1.0000);transform-origin:50% 0;">1</div>
<div class="t" style="top:580.11px;font-size:12.7px;line-height:14.19px;color:#141414;left:588.00px;transform:translateX(-50%) scaleX(1.0000);transform-origin:50% 0;">monthly fee</div>
<div class="t" style="top:580.11px;font-size:12.7px;line-height:14.19px;color:#141414;right:298.79px;">£2.750,00</div>
<div class="t" style="top:580.11px;font-size:12.7px;line-height:14.19px;color:#141414;right:244.99px;">20%</div>
<div class="t" style="top:580.11px;font-size:12.7px;line-height:14.19px;color:#141414;left:764.09px;">£</div>
<div class="t" style="top:580.11px;font-size:12.7px;line-height:14.19px;color:#141414;right:173.79px;">550,00</div>
<div class="t" style="top:580.11px;font-size:12.7px;line-height:14.19px;color:#141414;left:840.49px;">£</div>
<div class="t" style="top:580.11px;font-size:12.7px;line-height:14.19px;color:#141414;right:78.49px;">3.300,00</div>
<div class="t" style="top:597.11px;font-size:12.7px;line-height:14.19px;color:#141414;left:321.79px;">Extra service - season party</div>
<div class="t" style="top:597.11px;font-size:12.7px;line-height:14.19px;color:#141414;left:522.50px;transform:translateX(-50%) scaleX(1.0000);transform-origin:50% 0;">1</div>
<div class="t" style="top:597.11px;font-size:12.7px;line-height:14.19px;color:#141414;left:588.00px;transform:translateX(-50%) scaleX(1.0000);transform-origin:50% 0;">special service</div>
<div class="t" style="top:597.11px;font-size:12.7px;line-height:14.19px;color:#141414;right:298.79px;">£1.500,00</div>
<div class="t" style="top:597.11px;font-size:12.7px;line-height:14.19px;color:#141414;right:244.99px;">20%</div>
<div class="t" style="top:597.11px;font-size:12.7px;line-height:14.19px;color:#141414;left:764.09px;">£</div>
<div class="t" style="top:597.11px;font-size:12.7px;line-height:14.19px;color:#141414;right:173.79px;">300,00</div>
<div class="t" style="top:597.11px;font-size:12.7px;line-height:14.19px;color:#141414;left:840.49px;">£</div>
<div class="t" style="top:597.11px;font-size:12.7px;line-height:14.19px;color:#141414;right:78.49px;">1.800,00</div>
<div class="t" style="top:614.11px;font-size:12.7px;line-height:14.19px;color:#141414;left:321.79px;">Extra service - laundry</div>
<div class="t" style="top:614.11px;font-size:12.7px;line-height:14.19px;color:#141414;left:522.50px;transform:translateX(-50%) scaleX(1.0000);transform-origin:50% 0;">1</div>
<div class="t" style="top:614.11px;font-size:12.7px;line-height:14.19px;color:#141414;left:588.00px;transform:translateX(-50%) scaleX(1.0000);transform-origin:50% 0;">laundry</div>
<div class="t" style="top:614.11px;font-size:12.7px;line-height:14.19px;color:#141414;right:298.79px;">500,00</div>
<div class="t" style="top:614.11px;font-size:12.7px;line-height:14.19px;color:#141414;left:637.09px;">£</div>
<div class="t" style="top:614.11px;font-size:12.7px;line-height:14.19px;color:#141414;right:244.99px;">20%</div>
<div class="t" style="top:614.11px;font-size:12.7px;line-height:14.19px;color:#141414;left:764.09px;">£</div>
<div class="t" style="top:614.11px;font-size:12.7px;line-height:14.19px;color:#141414;right:173.79px;">100,00</div>
<div class="t" style="top:614.11px;font-size:12.7px;line-height:14.19px;color:#141414;left:840.49px;">£</div>
<div class="t" style="top:614.11px;font-size:12.7px;line-height:14.19px;color:#141414;right:78.49px;">600,00</div>
<div class="a" style="left:739px;top:499px;width:191px;height:26px;background:#f0f0f0;border:1px solid #a9a9a9"></div>
<div class="a" style="left:741px;top:501px;width:24px;height:22px;background:#c5d9ee;"></div>
<div class="a" style="left:767px;top:503px;width:1px;height:18px;background:#7a7a7a;"></div>
<div class="a" style="left:846px;top:503px;width:1px;height:18px;background:#7a7a7a;"></div>
<div class="a" style="left:901px;top:503px;width:1px;height:18px;background:#7a7a7a;"></div>
<svg style="left:747px;top:504px" width="11" height="15" viewBox="0 0 11 15"><path d="M1 1V12L4 9L6.5 13.5L8.5 12.5L6 8H10Z" fill="#2f3a4c"/></svg>
<svg style="left:774px;top:503px" width="18" height="19" viewBox="0 0 18 19"><path d="M1.5 2.5V18.5M16.5 2.5V18.5M11.5 2.5V18.5M7 2.5H16.5M7 7.8H16.5M7 13.2H16.5M7 18.5H16.5" fill="none" stroke="#1b1b1b" stroke-width="1.3"/><path d="M6 2V19" stroke="#2d6bd0" stroke-width="1.5"/></svg>
<svg style="left:798px;top:503px" width="18" height="19" viewBox="0 0 18 19"><path d="M1 2.5H17M1 12.8H17M1 18.3H17M1.5 7.5V18.3M16.5 7.5V18.3M9 7.5V18.3" fill="none" stroke="#1b1b1b" stroke-width="1.3"/><path d="M0.5 7.5H17.5" stroke="#2d6bd0" stroke-width="1.5"/></svg>
<svg style="left:822px;top:503px" width="20" height="19" viewBox="0 0 20 19"><path d="M1.5 2.5V18.5M7 2.5H17M7 7.8H17M7 13.2H11.5M7 18.5H11" fill="none" stroke="#1b1b1b" stroke-width="1.3" stroke-dasharray="2.5 1.2"/><path d="M6 2V19" stroke="#2d6bd0" stroke-width="1.5"/><path d="M12.5 12.5L18.5 18.5M18.5 12.5L12.5 18.5" stroke="#d42020" stroke-width="1.9"/></svg>
<svg style="left:853px;top:503px" width="19" height="19" viewBox="0 0 19 19"><rect x="1" y="2" width="17" height="16" fill="#e2e2e2"/><path d="M1 2H18V18H1ZM1 7.3H18M1 12.6H18M6.7 2V18M12.3 2V18" fill="none" stroke="#bdbdbd" stroke-width="1.2"/><rect x="7" y="7.5" width="5" height="5" fill="#cfcfcf"/></svg>
<svg style="left:878px;top:503px" width="19" height="19" viewBox="0 0 19 19"><rect x="1" y="2" width="17" height="16" fill="#e6e6e6"/><path d="M1 2H18V18H1ZM1 10H18M9.5 2V18M1 6H9.5M1 14H9.5" fill="none" stroke="#c4c4c4" stroke-width="1.2"/></svg>
<svg style="left:905px;top:502px" width="22" height="21" viewBox="0 0 22 21"><path d="M1.5 16V1.5H16" fill="none" stroke="#1b1b1b" stroke-width="1.6"/><rect x="5.5" y="5.5" width="15" height="14" fill="#fff" stroke="#1d5e2c" stroke-width="1.6"/><path d="M5.5 10H20.5M5.5 14.8H20.5M10.5 5.5V19.5M15.5 5.5V19.5" stroke="#1d5e2c" stroke-width="1.4"/></svg>
<div class="t" style="top:717.31px;font-size:12.7px;line-height:14.19px;font-weight:bold;color:#141414;right:180.69px;">Sub Total</div>
<div class="t" style="top:734.01px;font-size:12.7px;line-height:14.19px;font-weight:bold;color:#141414;right:179.49px;transform:scaleX(1.0557);transform-origin:100% 0;">Total VAT</div>
<div class="t" style="top:717.31px;font-size:12.7px;line-height:14.19px;color:#141414;left:840.79px;">£</div>
<div class="t" style="top:734.01px;font-size:12.7px;line-height:14.19px;color:#141414;left:840.79px;">£</div>
<div class="t" style="top:717.31px;font-size:12.7px;line-height:14.19px;color:#141414;right:79.49px;">35.000,00</div>
<div class="t" style="top:734.01px;font-size:12.7px;line-height:14.19px;color:#141414;right:79.49px;">7.000,00</div>
<div class="a" style="left:708px;top:749px;width:221px;height:1px;background:#1f1f1f;"></div>
<div class="a" style="left:708px;top:750px;width:221px;height:2px;background:#a8a8a8;"></div>
<div class="a" style="left:708px;top:752px;width:221px;height:1.2px;background:#1f1f1f;"></div>
<div class="t" style="top:769.81px;font-size:12.7px;line-height:14.19px;font-weight:bold;color:#141414;left:710.79px;">Total amount due</div>
<div class="t" style="top:769.81px;font-size:12.7px;line-height:14.19px;font-weight:bold;color:#141414;left:840.79px;">£</div>
<div class="t" style="top:769.81px;font-size:12.7px;line-height:14.19px;font-weight:bold;color:#141414;right:79.49px;">42.000,00</div>
<div class="a" style="left:986px;top:302px;width:12px;height:496px;background:#ededed;"></div>
<div class="a" style="left:986px;top:424px;width:12px;height:212px;background:#cdcdcd;"></div>
<svg style="left:989px;top:306px" width="7" height="5" viewBox="0 0 7 5"><path d="M0.8 4.2L3.5 1.3L6.2 4.2" fill="none" stroke="#1b1b1b" stroke-width="1.5"/></svg>
<svg style="left:989px;top:788px" width="7" height="5" viewBox="0 0 7 5"><path d="M0.8 0.8L3.5 3.7L6.2 0.8" fill="none" stroke="#1b1b1b" stroke-width="1.5"/></svg>
<div class="a" style="left:215px;top:798px;width:784px;height:16px;background:#ededed;border-bottom:1px solid #c8ccd1"></div>
<div class="a" style="left:230px;top:799px;width:726px;height:13px;background:#cdcdcd;"></div>
<svg style="left:219px;top:802px" width="5" height="7" viewBox="0 0 5 7"><path d="M4.2 0.8L1.3 3.5L4.2 6.2" fill="none" stroke="#1b1b1b" stroke-width="1.5"/></svg>
<svg style="left:975px;top:802px" width="5" height="7" viewBox="0 0 5 7"><path d="M0.8 0.8L3.7 3.5L0.8 6.2" fill="none" stroke="#1b1b1b" stroke-width="1.5"/></svg>
<div class="a" style="left:215px;top:814px;width:784px;height:34px;background:#ffffff;"></div>
<svg style="left:230px;top:823px" width="13" height="16" viewBox="0 0 13 16"><path d="M0.8 0.8H8L12.2 5V15.2H0.8Z" fill="none" stroke="#111" stroke-width="1.6"/><path d="M7.5 1V5.5H12" fill="none" stroke="#111" stroke-width="1.2"/></svg>
<div class="a" style="left:258px;top:818px;width:24px;height:26px;background:#ccd5e0;"></div>
<svg style="left:263px;top:822px" width="14" height="17" viewBox="0 0 14 17"><path d="M1 1V4.8H13V1" fill="none" stroke="#111" stroke-width="1.6"/><path d="M1 16.5V9.5H9.5L13 13V16.5" fill="none" stroke="#111" stroke-width="1.6"/></svg>
<svg style="left:293px;top:823px" width="20" height="16" viewBox="0 0 20 16"><path d="M0.8 0.8H14L19 5.5V15.2H0.8Z" fill="none" stroke="#111" stroke-width="1.6"/><path d="M10 1.5V14.5" stroke="#333" stroke-width="1.2"/></svg>
<svg style="left:326px;top:822px" width="21" height="17" viewBox="0 0 21 17"><path d="M1 1V4.8H20V1" fill="none" stroke="#111" stroke-width="1.6"/><path d="M1 16.5V9.5H15L19.5 13.5V16.5" fill="none" stroke="#111" stroke-width="1.6"/><path d="M10 9.5V16.5" stroke="#333" stroke-width="1.1"/></svg>
<svg style="left:361px;top:823px" width="17" height="16" viewBox="0 0 17 16"><rect x="0.8" y="0.8" width="15.4" height="11" fill="none" stroke="#111" stroke-width="1.6"/><path d="M8.5 12V15M4.5 15.2H12.5" stroke="#111" stroke-width="1.6"/></svg>
<svg style="left:538px;top:823px" width="15" height="15" viewBox="0 0 15 15"><circle cx="6.8" cy="6.8" r="5.8" fill="none" stroke="#1b1b1b" stroke-width="1.4"/><path d="M4 7L6.2 9.2L10 4.8" fill="none" stroke="#1b1b1b" stroke-width="1.4"/><path d="M10.8 10.8L14 14" stroke="#1b1b1b" stroke-width="1.6"/></svg>
<div class="t" style="top:825.00px;font-size:10.5px;line-height:11.73px;left:558.58px;transform:scaleX(0.9796);transform-origin:0 0;">Hintergrunderkennung abgeschlossen</div>
<svg style="left:767px;top:824px" width="17" height="14" viewBox="0 0 17 14"><path d="M1.2 2.2L3.4 1.2V13.2M12.2 2.2L14.4 1.2V13.2" fill="none" stroke="#111" stroke-width="1.8"/><rect x="7.6" y="4.2" width="2" height="2" fill="#111"/><rect x="7.6" y="9.5" width="2" height="2" fill="#111"/></svg>
<svg style="left:801px;top:826px" width="17" height="8" viewBox="0 0 17 8"><path d="M3 4H14" stroke="#111820" stroke-width="1.6"/><path d="M0.5 4L4.5 0.8V7.2Z M16.5 4L12.5 0.8V7.2Z" fill="#111820"/></svg>
<svg style="left:836px;top:823px" width="14" height="14" viewBox="0 0 14 14"><path d="M1 1L13 13M13 1L1 13M1 5.5V1H5.5M8.5 1H13V5.5M13 8.5V13H8.5M5.5 13H1V8.5" fill="none" stroke="#1b1b1b" stroke-width="1.5"/></svg>
<div class="a" style="left:864px;top:820px;width:59px;height:20px;background:#fff;border:1px solid #2a2a2a"></div>
<div class="t" style="top:824.50px;font-size:10.5px;line-height:11.73px;left:868.58px;transform:scaleX(0.9143);transform-origin:0 0;">112%</div>
<svg style="left:909px;top:828px" width="9" height="5" viewBox="0 0 9 5"><path d="M0.5 0.5L4.5 4.5L8.5 0.5" fill="none" stroke="#1b1b1b" stroke-width="1"/></svg>
<div class="a" style="left:938px;top:830px;width:12px;height:2px;background:#1b1b1b;"></div>
<div class="a" style="left:971px;top:830px;width:13px;height:2px;background:#1b1b1b;"></div>
<div class="a" style="left:976.5px;top:824px;width:2px;height:13px;background:#1b1b1b;"></div>
</body></html>
